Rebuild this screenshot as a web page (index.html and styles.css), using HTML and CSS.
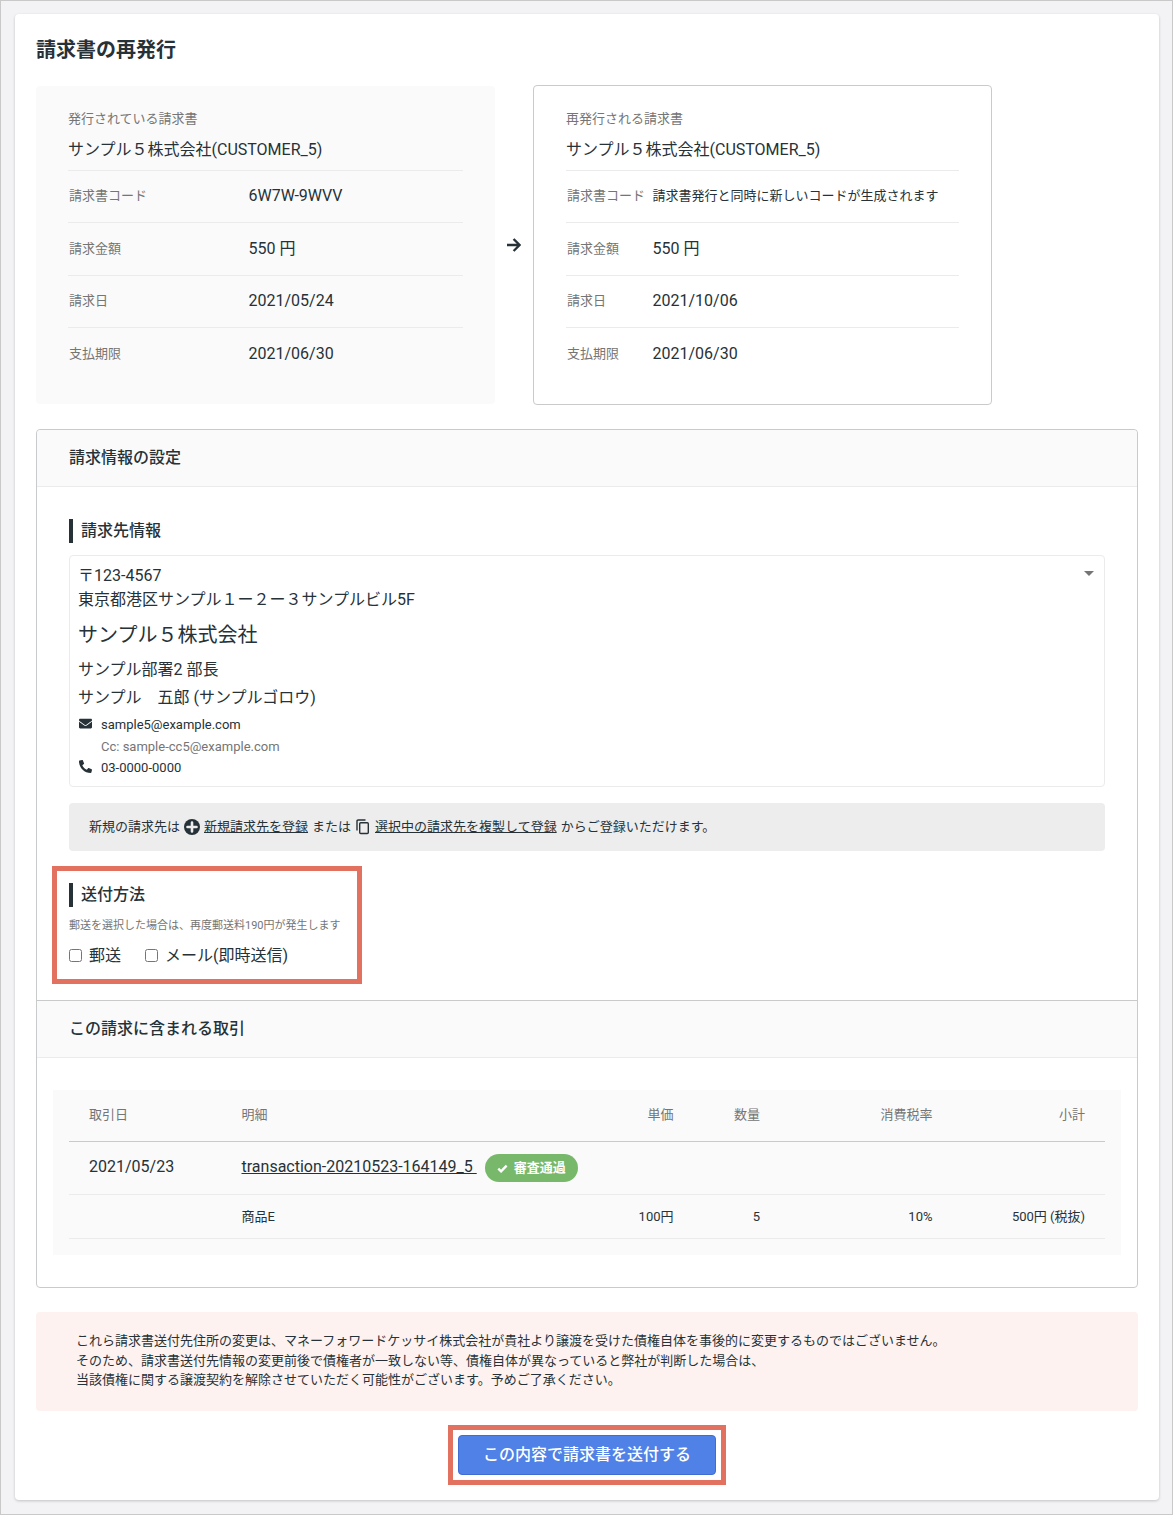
FILE: index.html
```
<!DOCTYPE html>
<html lang="ja">
<head>
<meta charset="UTF-8">
<meta name="viewport" content="width=device-width, initial-scale=1.0">
<title>請求書の再発行</title>
<link rel="stylesheet" href="styles.css">
</head>
<body>
<div class="page">
<main class="card">
    <h1>請求書の再発行</h1>

    <div class="compare">
        <div class="invoice">
            <div class="caption">発行されている請求書</div>
            <div class="customer">サンプル５株式会社(CUSTOMER_5)</div>
            <dl>
                <div class="row"><dt>請求書コード</dt><dd>6W7W-9WVV</dd></div>
                <div class="row"><dt>請求金額</dt><dd>550 円</dd></div>
                <div class="row"><dt>請求日</dt><dd>2021/05/24</dd></div>
                <div class="row"><dt>支払期限</dt><dd>2021/06/30</dd></div>
            </dl>
        </div>
        <svg class="arrow" viewBox="0 0 14 14"><path d="M0 7H12M6.600 1L12.600 7L6.600 13" fill="none" stroke="#263238" stroke-width="2.400"/></svg>
        <div class="invoice new">
            <div class="caption">再発行される請求書</div>
            <div class="customer">サンプル５株式会社(CUSTOMER_5)</div>
            <dl>
                <div class="row"><dt>請求書コード</dt><dd class="small">請求書発行と同時に新しいコードが生成されます</dd></div>
                <div class="row"><dt>請求金額</dt><dd>550 円</dd></div>
                <div class="row"><dt>請求日</dt><dd>2021/10/06</dd></div>
                <div class="row"><dt>支払期限</dt><dd>2021/06/30</dd></div>
            </dl>
        </div>
    </div>

    <div class="panel">
        <h2>請求情報の設定</h2>
        <div class="settings">
            <h3>請求先情報</h3>
            <div class="destination">
                <div class="address">〒123-4567<br>東京都港区サンプル１ー２ー３サンプルビル5F</div>
                <div class="company">サンプル５株式会社</div>
                <div class="person">サンプル部署2 部長</div>
                <div class="person">サンプル　五郎 (サンプルゴロウ)</div>
                <div class="contact">
                    <svg viewBox="0 0 512 384"><path fill="#263238" d="M502 127c4-3 10 0 10 5v204c0 26-22 48-48 48H48c-26 0-48-22-48-48V132c0-5 6-8 10-5 22 18 52 40 155 114 21 16 57 48 91 48 34 0 71-33 91-48 103-74 133-97 155-114zM256 256c23 0 57-30 74-42 133-96 143-105 174-129 5-5 8-12 8-19V48c0-26-22-48-48-48H48C22 0 0 22 0 48v18c0 7 3 14 9 19 30 24 40 33 173 129 17 12 51 42 74 42z"/></svg>
                    sample5@example.com
                </div>
                <div class="contact cc">Cc: sample-cc5@example.com</div>
                <div class="contact">
                    <svg viewBox="0 0 512 512"><path fill="#263238" d="M18.6 24.6l104-24c11.300-2.600 22.900 3.300 27.500 13.900l48 112c4.200 9.800 1.400 21.300-6.900 28l-60.600 49.600c36 76.700 98.900 140.500 177.200 177.200l49.600-60.600c6.800-8.300 18.200-11.100 28-6.900l112 48c10.700 4.600 16.500 16.100 13.900 27.500l-24 104c-2.500 10.800-12.100 18.600-23.400 18.600C207.900 512 0 304.500 0 48c0-11.200 7.700-20.900 18.600-23.400z"/></svg>
                    03-0000-0000
                </div>
                <span class="caret"></span>
            </div>
            <div class="guide">
                <span>新規の請求先は</span>
                <svg class="plus" viewBox="0 0 16 16"><circle cx="8" cy="8" r="8" fill="#263238"/><path d="M8 3.500V12.500M3.500 8H12.500" stroke="#ededed" stroke-width="2.600" stroke-linecap="round"/></svg>
                <a href="#">新規請求先を登録</a>
                <span>または</span>
                <svg class="copy" viewBox="0 0 14 16"><path d="M1 11.500V2.200Q1 1 2.200 1H9.500M4.700 3.700H11.300Q12.300 3.700 12.300 4.700V13.500Q12.300 14.500 11.300 14.500H4.700Q3.700 14.500 3.700 13.500V4.700Q3.700 3.700 4.700 3.700Z" fill="none" stroke="#263238" stroke-width="1.400"/></svg>
                <a href="#">選択中の請求先を複製して登録</a>
                <span>からご登録いただけます。</span>
            </div>
            <div class="delivery">
                <h3>送付方法</h3>
                <div class="note">郵送を選択した場合は、再度郵送料190円が発生します</div>
                <div class="choices">
                    <label><input type="checkbox">郵送</label>
                    <label><input type="checkbox">メール(即時送信)</label>
                </div>
            </div>
        </div>

        <h2 class="second">この請求に含まれる取引</h2>
        <div class="transactions">
            <table>
                <colgroup><col class="c-date"><col><col class="c-price"><col class="c-count"><col class="c-tax"><col class="c-total"></colgroup>
                <tr class="head"><th>取引日</th><th>明細</th><th class="num">単価</th><th class="num">数量</th><th class="num">消費税率</th><th class="num">小計</th></tr>
                <tr class="deal">
                    <td>2021/05/23</td>
                    <td colspan="5"><div class="deal-name"><a href="#">transaction-20210523-164149_5&nbsp;</a><span class="badge"><svg viewBox="0 0 12 10"><path d="M1.300 5.200L4.400 8.200L10.600 1.800" fill="none" stroke="#fff" stroke-width="2.600"/></svg>審査通過</span></div></td>
                </tr>
                <tr class="item"><td></td><td>商品E</td><td class="num">100円</td><td class="num">5</td><td class="num">10%</td><td class="num">500円 (税抜)</td></tr>
            </table>
        </div>
    </div>

    <div class="warning">これら請求書送付先住所の変更は、マネーフォワードケッサイ株式会社が貴社より譲渡を受けた債権自体を事後的に変更するものではございません。<br>そのため、請求書送付先情報の変更前後で債権者が一致しない等、債権自体が異なっていると弊社が判断した場合は、<br>当該債権に関する譲渡契約を解除させていただく可能性がございます。予めご了承ください。</div>

    <div class="submit">
        <button>この内容で請求書を送付する</button>
    </div>
</main>
</div>
</body>
</html>
```
FILE: styles.css
```
*, *::after {
    box-sizing:border-box;
}
body {
    margin:0; color:#263238;
    font-family:Roboto,'Noto Sans CJK JP',sans-serif;
    font-size:16px; line-height:24px;
}
h1, h2, h3, dl, dd {
    margin:0;
}
a {
    color:inherit;
}
.page {
    min-height:1515px; padding:13px 13px 14px 14px;
    background:#f3f3f6; border:1px solid #c9c9c9;
}
.card {
    height:1486px; padding:21px 21px 0;
    background:#fff; border-radius:4px;
    box-shadow:0 1px 3px rgba(0,0,0,0.2);
}
h1 {
    font-size:20px; line-height:30px; font-weight:700;
}

/* current / reissued invoice */
.compare {
    display:flex; align-items:center; margin-top:20px;
}
.invoice {
    width:459px; height:318px; padding:23px 32px 0;
    background:#fafafa; border-radius:4px;
}
.invoice.new {
    height:320px; background:#fff; border:1px solid #c8cacb;
}
.arrow {
    width:14px; height:14px; margin:0 12px;
}
.caption {
    font-size:13px; line-height:20px; color:#757575;
}
.customer {
    margin-top:9px; padding-bottom:8px;
}
.row {
    display:flex; align-items:center; height:52.500px; padding-left:1px;
    border-top:1px solid #ebebeb;
}
.row:first-child {
    height:52px; padding-bottom:1px;
}
.row dt {
    width:179.500px; font-size:13px; color:#757575;
}
.new .row dt {
    width:85.500px;
}
.row dd.small {
    font-size:13px; white-space:nowrap;
}

.panel {
    height:859px; margin-top:24px;
    border:1px solid #c8cacb; border-radius:4px;
}
h2 {
    height:57px; padding:16px 32px 0;
    background:#fafafa; border-bottom:1px solid #ebebeb; border-radius:4px 4px 0 0;
    font-size:16px; font-weight:500;
}
h2.second {
    height:58px; border-top:1px solid #c8cacb; border-radius:0;
}
.settings {
    height:513px; padding:32px 32px 0;
}
h3 {
    padding-left:8px; border-left:4px solid #263238;
    font-size:16px; font-weight:500;
}
.destination {
    position:relative; height:232px; margin-top:12px; padding:8px;
    border:1px solid #ebebeb; border-radius:4px;
}
.company {
    margin-top:8px; font-size:20px; line-height:30px;
}
.person {
    margin-top:8px;
}
.person + .person {
    margin-top:4px;
}
.contact {
    display:flex; align-items:center; margin-top:4px; padding-left:1px;
    font-size:13px; line-height:21.500px;
}
.contact + .contact {
    margin-top:0;
}
.contact svg {
    width:13px; height:13px; margin:-2px 9px 0 0;
}
.contact.cc {
    padding-left:23px; line-height:21px; color:#757575;
}
.caret {
    position:absolute; top:15px; right:10px;
    border:5px solid transparent; border-top-color:#757575; border-bottom:0;
}
.guide {
    display:flex; align-items:center; gap:4px;
    height:48px; margin-top:16px; padding:0 20px;
    background:#ededed; border-radius:4px; font-size:13px;
}
.plus {
    width:16px; height:16px;
}
.copy {
    width:16px; height:16px;
}
.delivery {
    position:relative; margin-top:32px;
}
.note {
    margin-top:10px; font-size:11px; line-height:18px; color:#757575;
}
.choices {
    display:flex; gap:24px; margin-top:9px;
}
.choices label {
    display:flex; align-items:center;
}
.choices input {
    width:13px; height:13px; margin:-1px 7px 0 0;
}

/* highlight frames */
.delivery::after, .submit::after {
    content:''; position:absolute; border:5px solid #e37160;
}
.delivery::after {
    left:-17px; top:-17px; width:310px; height:118px;
}
.submit::after {
    inset:-10px;
}

.transactions {
    margin:32px 16px 0; padding:0 16px 16px; background:#fafafa;
}
table {
    width:100%; table-layout:fixed; border-collapse:separate; border-spacing:0;
}
.c-date, .c-total { width:152.500px; }
.c-price { width:120px; }
.c-count { width:86.500px; }
.c-tax { width:172.500px; }
th, td {
    padding:0 20px; text-align:left; border-bottom:1px solid #ebebeb;
}
.num {
    text-align:right; white-space:nowrap;
}
.head th {
    height:52px; padding-bottom:1px; font-size:13px; font-weight:400; color:#757575;
    border-color:#c8cacb;
}
.deal td {
    height:53px;
}
.deal td:first-child, .deal-name a {
    padding-bottom:2px;
}
.deal-name {
    display:flex; align-items:center;
}
.badge {
    display:flex; align-items:center; height:28px; margin-left:8px; padding:0 12px;
    background:#77b86b; color:#fff; border-radius:14px;
    font-size:13px; font-weight:700;
}
.badge svg {
    width:11px; height:9px; margin-right:6px;
}
.item td {
    height:44px; font-size:13px;
}
.warning {
    height:99px; margin-top:24px; padding:19px 40px 0;
    background:#fdf2f0; border-radius:4px;
    font-size:13px; line-height:19.500px;
}
.submit {
    position:relative; width:258px; margin:24px auto 0;
}
.submit button {
    display:block; width:258px; height:40px; padding:0;
    background:#4f81e6; color:#fff; border:1px solid #416cd2; border-radius:4px;
    font:500 16px/24px Roboto,'Noto Sans CJK JP',sans-serif;
}
```
